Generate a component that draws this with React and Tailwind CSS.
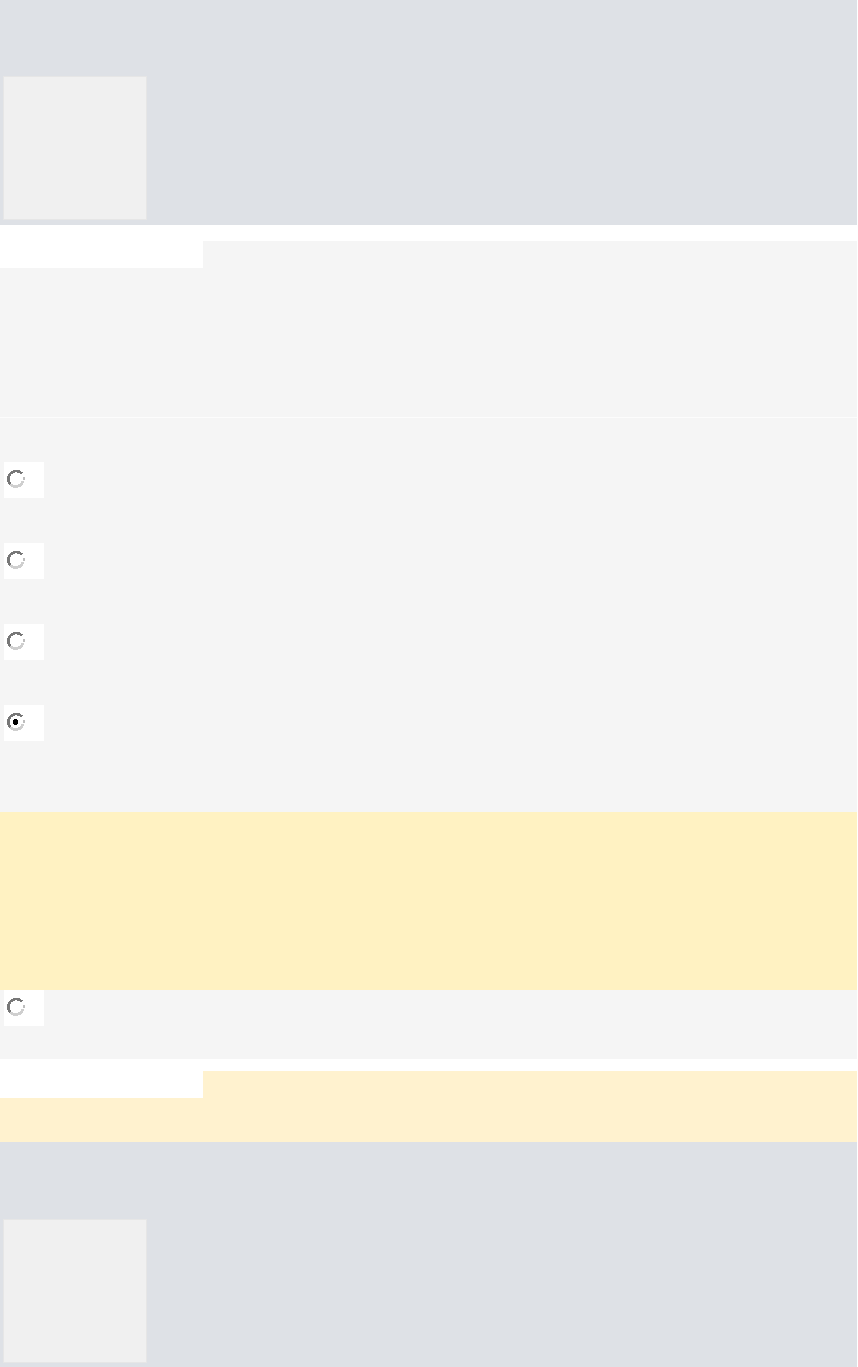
const Radio = ({ checked }) => (
    <div className="w-10 h-9 bg-white pl-[2px] pt-[7px]">
        <svg width="20" height="20" viewBox="0 0 20 20" shapeRendering="crispEdges">
            <path d="M16 4.5 A7.5 7.5 0 1 0 4.5 15.5" fill="none" stroke="#777777" strokeWidth="2.6" />
            <path d="M4.5 15.5 A7.5 7.5 0 0 0 17 12" fill="none" stroke="#cfcfcf" strokeWidth="2.6" />
            <path d="M18 8 L18 11" stroke="#bdbdbd" strokeWidth="1.5" />
            {checked && <circle cx="9.5" cy="10" r="3" fill="#000" />}
        </svg>
    </div>
);

const Band = ({ boxTop }) => (
    <div className="h-[225px] bg-[#dee1e6] pl-[3px]" style={{ paddingTop: boxTop }}>
        <div className="w-[144px] h-[144px] bg-[#f0f0f0] border border-[#e6e6e6]" />
    </div>
);

export default function App() {
    return (
        <div className="w-[857px] bg-white" style={{ fontFamily: '"Liberation Sans", Arial, sans-serif' }}>
            <Band boxTop={76} />

            <div className="h-4" />

            {/* Options panel */}
            <div className="flex h-[27px]">
                <div className="w-[203px] bg-white" />
                <div className="flex-1 bg-[#f5f5f5]" />
            </div>
            <div className="h-[149px] bg-[#f5f5f5]" />
            <div className="h-px bg-[#fcfcfc]" />
            <div className="bg-[#f5f5f5] pt-[44px] pb-[71px] pl-1 flex flex-col gap-[45px]">
                <Radio />
                <Radio />
                <Radio />
                <Radio checked />
            </div>

            <div className="h-[178px] bg-[#fff2c2]" />

            <div className="h-[69px] bg-[#f5f5f5] pl-1">
                <Radio />
            </div>

            <div className="h-3" />

            <div className="flex h-[27px]">
                <div className="w-[203px] bg-white" />
                <div className="flex-1 bg-[#fff2cf]" />
            </div>
            <div className="h-[44px] bg-[#fff2cf]" />

            <Band boxTop={77} />
        </div>
    );
}
